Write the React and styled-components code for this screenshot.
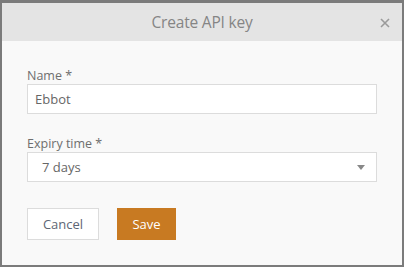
import React from 'react';
import styled, { createGlobalStyle } from 'styled-components';

const Global = createGlobalStyle`
    html, body {
        margin: 0;
        padding: 0;
        background: #7b7b7b;
    }
    body {
        font-family: "Open Sans", "Noto Sans", sans-serif;
    }
`

const Frame = styled.div`
    width: 404px;
    height: 267px;
    box-sizing: border-box;
    padding: 3px 2px 2px 2px;
    background: #7b7b7b;
`
const Dialog = styled.div`
    height: 100%;
    display: flex;
    flex-direction: column;
    background: #f9f9f9;
`
const Header = styled.div`
    height: 38px;
    display: flex;
    align-items: center;
    justify-content: center;
    position: relative;
    background: #e4e4e4;
`
const Title = styled.div`
    font-size: 15.5px;
    color: #858585;
    letter-spacing: -0.2px;
`
const Close = styled.button`
    position: absolute;
    right: 12px;
    top: 15px;
    border: 0;
    padding: 0;
    background: transparent;
    display: flex;
`
const Body = styled.div`
    display: flex;
    flex-direction: column;
    padding: 26px 25px 0 25px;
`
const Field = styled.div`
    display: flex;
    flex-direction: column;
    margin-bottom: ${props => props.gap}px;
`
const Label = styled.label`
    font-size: 12.5px;
    color: #6e6e6e;
    line-height: 17px;
`
const Box = styled.div`
    height: 30px;
    box-sizing: border-box;
    border: 1px solid #dcdcdc;
    background: #fff;
    display: flex;
    align-items: center;
    justify-content: space-between;
    padding: 0 0 0 ${props => props.inset}px;
    font-size: 13px;
    color: #666;
`
const Arrow = styled.span`
    width: 0;
    height: 0;
    margin-right: 11px;
    border-left: 4px solid transparent;
    border-right: 4px solid transparent;
    border-top: 5px solid #888;
`
const Buttons = styled.div`
    display: flex;
    gap: 18px;
`
const Button = styled.button`
    height: 32px;
    width: ${props => props.w}px;
    box-sizing: border-box;
    font-family: inherit;
    font-size: 13px;
    border: 1px solid ${props => props.primary ? '#c87a22' : '#dcdcdc'};
    background: ${props => props.primary ? '#c87a22' : '#fff'};
    color: ${props => props.primary ? '#fff' : '#5d6675'};
    padding: 0;
`

const App = () => {
    return (
        <Frame>
            <Global/>
            <Dialog>
                <Header>
                    <Title>Create API key</Title>
                    <Close>
                        <svg width="10" height="10" viewBox="0 0 10 10">
                            <path d="M1 1L9 9M9 1L1 9" stroke="#9a9a9a" strokeWidth="1.6"/>
                        </svg>
                    </Close>
                </Header>
                <Body>
                    <Field gap={21}>
                        <Label>Name *</Label>
                        <Box inset={7}>Ebbot</Box>
                    </Field>
                    <Field gap={26}>
                        <Label>Expiry time *</Label>
                        <Box inset={14}>
                            7 days
                            <Arrow/>
                        </Box>
                    </Field>
                    <Buttons>
                        <Button w={72}>Cancel</Button>
                        <Button w={59} primary>Save</Button>
                    </Buttons>
                </Body>
            </Dialog>
        </Frame>
    );
};

export default App;
